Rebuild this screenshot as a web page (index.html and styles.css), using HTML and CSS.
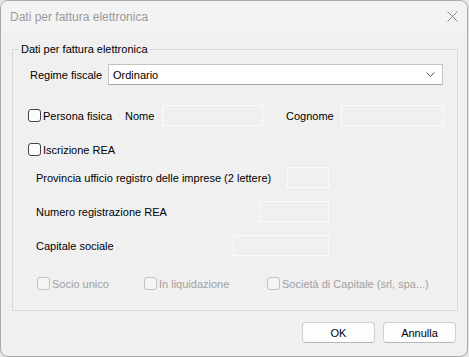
FILE: index.html
```html
<!DOCTYPE html>
<html lang="it">

<head>
    <meta charset="UTF-8">
    <meta name="viewport" content="width=device-width, initial-scale=1.0">
    <title>Dati per fattura elettronica</title>

    <link rel="stylesheet" href="styles.css">
</head>

<body>
    <div class="window">
        <div class="titlebar">
            <span class="title">Dati per fattura elettronica</span>
            <span class="close">
                <svg width="11" height="11" viewBox="0 0 11 11">
                    <path d="M0.5 0.5 L10.5 10.5 M10.5 0.5 L0.5 10.5" stroke="#8a8a8a" stroke-width="1" fill="none" />
                </svg>
            </span>
        </div>

        <div class="content">
            <fieldset class="group">
                <legend>Dati per fattura elettronica</legend>

                <div class="row row-regime">
                    <span class="lbl-regime">Regime fiscale</span>
                    <div class="select">
                        <span>Ordinario</span>
                        <svg width="9" height="6" viewBox="0 0 9 6">
                            <path d="M0.5 0.5 L4.5 4.5 L8.5 0.5" stroke="#555" stroke-width="1" fill="none" />
                        </svg>
                    </div>
                </div>

                <div class="row row-persona">
                    <label class="check check-persona"><span class="box"></span>Persona fisica</label>
                    <span class="lbl-nome">Nome</span>
                    <span class="input input-nome"></span>
                    <span class="lbl-cognome">Cognome</span>
                    <span class="input input-cognome"></span>
                </div>

                <div class="row row-rea">
                    <label class="check"><span class="box"></span>Iscrizione REA</label>
                </div>

                <div class="row row-field">
                    <span>Provincia ufficio registro delle imprese (2 lettere)</span>
                    <span class="input input-prov"></span>
                </div>

                <div class="row row-field">
                    <span>Numero registrazione REA</span>
                    <span class="input input-num"></span>
                </div>

                <div class="row row-field">
                    <span>Capitale sociale</span>
                    <span class="input input-cap"></span>
                </div>

                <div class="row row-flags">
                    <label class="check disabled flag-socio"><span class="box"></span>Socio unico</label>
                    <label class="check disabled flag-liq"><span class="box"></span>In liquidazione</label>
                    <label class="check disabled"><span class="box"></span>Società di Capitale (srl, spa...)</label>
                </div>
            </fieldset>

            <div class="buttons">
                <button class="btn">OK</button>
                <button class="btn">Annulla</button>
            </div>
        </div>
    </div>
</body>

</html>
```

FILE: styles.css
```css
* {
    margin: 0;
    padding: 0;
    box-sizing: border-box;
}

body {
    background: #e6e6e6;
    font-family: "Liberation Sans", Arial, sans-serif;
    font-size: 11px;
    color: #000;
}

.window {
    width: 468px;
    height: 357px;
    background: #f0f0f0;
    border: 1px solid #a9a9a9;
    border-radius: 8px;
    overflow: hidden;
}

.titlebar {
    height: 30px;
    background: #f3f3f3;
    display: flex;
    align-items: center;
    justify-content: space-between;
    padding: 0 9px 0 9px;
}

.title {
    font-size: 12px;
    color: #9a9a9a;
    margin-top: 2px;
}

.close {
    display: flex;
    margin-top: 0;
}

.content {
    padding: 11px 9px 0 11px;
}

.group {
    border: 1px solid #d9d9d9;
    padding: 8px 0 16px 0;
}

.group legend {
    margin-left: 6px;
    padding: 0 2px;
    line-height: 14px;
}

.row {
    display: flex;
    align-items: center;
    height: 21px;
}

.row-regime {
    padding-left: 17px;
}

.lbl-regime {
    width: 78px;
}

.select {
    width: 335px;
    height: 21px;
    background: #fff;
    border: 1px solid #c4c4c4;
    border-bottom-color: #a8a8a8;
    display: flex;
    align-items: center;
    justify-content: space-between;
    padding: 0 7px 0 4px;
}

.input {
    height: 21px;
    border: 1px solid #fbfbfb;
    background: #f0f0f0;
}

.row-persona {
    margin-top: 20px;
    padding-left: 15px;
}

.check {
    display: flex;
    align-items: center;
}

.box {
    width: 13px;
    height: 13px;
    border: 1px solid #444;
    border-radius: 3px;
    background: #fcfcfc;
    margin-right: 2px;
}

.check-persona {
    width: 97px;
}

.lbl-nome {
    width: 37px;
}

.input-nome {
    width: 101px;
    margin-right: 23px;
}

.lbl-cognome {
    width: 55px;
}

.input-cognome {
    width: 103px;
}

.row-rea {
    margin-top: 13px;
    padding-left: 15px;
}

.row-field {
    margin-top: 13px;
    margin-left: 23px;
    width: 293px;
    justify-content: space-between;
}

.row-rea + .row-field {
    margin-top: 7px;
}

.input-prov {
    width: 42px;
}

.input-num {
    width: 70px;
}

.input-cap {
    width: 96px;
}

.row-flags {
    margin-top: 17px;
    padding-left: 24px;
}

.check.disabled {
    color: #a0a0a0;
}

.check.disabled .box {
    border-color: #c2c2c2;
    background: #f5f5f5;
}

.flag-socio {
    width: 107px;
}

.flag-liq {
    width: 123px;
}

.buttons {
    display: flex;
    justify-content: flex-end;
    gap: 8px;
    margin-top: 11px;
    padding-right: 2px;
}

.btn {
    width: 73px;
    height: 21px;
    background: #fdfdfd;
    border: 1px solid #cfcfcf;
    border-bottom-color: #b8b8b8;
    border-radius: 4px;
    font-family: "Liberation Sans", Arial, sans-serif;
    font-size: 11px;
    color: #000;
}
```
